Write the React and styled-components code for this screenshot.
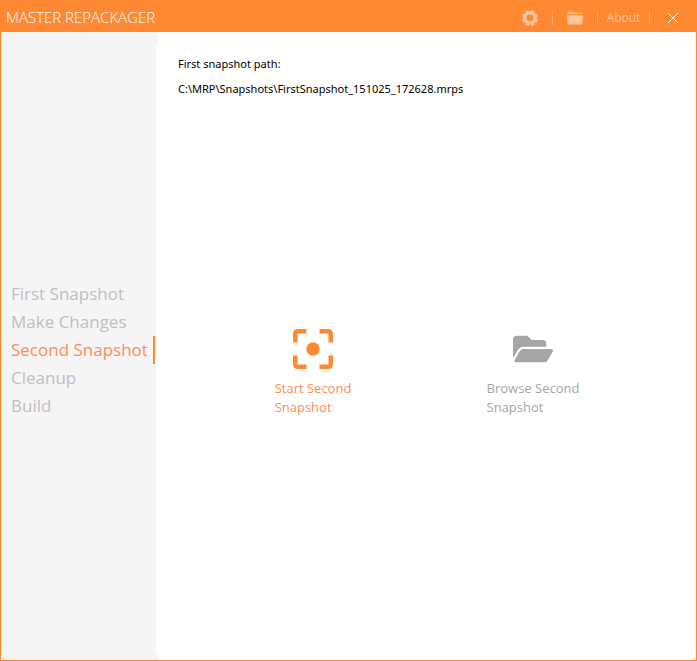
import React from "react";
import styled, { createGlobalStyle } from "styled-components";
import { FaFolderOpen } from "react-icons/fa";

const accent = "#ff8833";

const GlobalStyle = createGlobalStyle`
  *, *::before, *::after { box-sizing: border-box; }
  body { margin: 0; background: #fff; }
  button, input { font: inherit; color: inherit; }
`;

const Window = styled.div`
  display: flex;
  flex-direction: column;
  min-height: 100vh;
  border: 1px solid ${accent};
  font-family: "Open Sans", "Noto Sans", sans-serif;
`;

const TitleBar = styled.header`
  display: flex;
  align-items: center;
  justify-content: space-between;
  height: 31px;
  padding: 0 1px 0 5px;
  background: ${accent};
  color: #fff;
`;

const Title = styled.h1`
  margin: 0;
  font-size: 15px;
  font-weight: 300;
  line-height: 24px;
`;

const Tools = styled.div`
  display: flex;
  align-items: center;
  padding-top: 2px;
`;

const ToolButton = styled.button`
  display: flex;
  align-items: center;
  justify-content: center;
  width: ${(p) => p.$width}px;
  height: 24px;
  padding: 0;
  border: 0;
  background: none;
  color: ${(p) => (p.$strong ? "#fff" : "#ffc499")};
  font-size: 12px;
  cursor: pointer;
`;

const Divider = styled.span`
  width: 1px;
  height: 14px;
  background: #ffab70;
`;

const Body = styled.div`
  display: flex;
  flex: 1;
`;

const Sidebar = styled.nav`
  position: relative;
  display: flex;
  flex-direction: column;
  justify-content: center;
  flex: 0 0 155px;
  padding: 7px 1px 0 0;
  background: #f5f5f5;

  &::before,
  &::after {
    content: "";
    position: absolute;
    left: 100%;
    width: 2px;
    background: #f5f5f5;
  }
  &::before {
    top: 0;
    height: 11px;
  }
  &::after {
    bottom: 0;
    height: 6px;
  }
`;

const Step = styled.button`
  height: 28px;
  padding: 0 0 0 10px;
  border: 0;
  border-right: 2px solid ${(p) => (p.$active ? accent : "transparent")};
  background: none;
  color: ${(p) => (p.$active ? "#ff8c5a" : "#bfbfbf")};
  font-size: 17px;
  line-height: 28px;
  text-align: left;
  white-space: nowrap;
  cursor: pointer;
`;

const Main = styled.main`
  display: flex;
  flex: 1;
  flex-direction: column;
  padding: 22px 28px 14px 22px;
`;

const PathField = styled.div`
  display: flex;
  flex-direction: column;
  gap: 5px;
  color: #000;
  font-family: "Noto Sans", "Open Sans", sans-serif;
  font-size: 11px;
  line-height: 20px;
`;

const PathInput = styled.input`
  width: 100%;
  height: 20px;
  padding: 0;
  border: 0;
  outline: 0;
  background: none;
`;

const Actions = styled.div`
  display: grid;
  flex: 1;
  grid-template-columns: repeat(2, 220px);
  align-content: center;
  justify-content: center;
`;

const Action = styled.button`
  display: flex;
  flex-direction: column;
  align-items: center;
  gap: 9px;
  padding: 0;
  border: 0;
  background: none;
  color: ${(p) => (p.$primary ? "#ff8c5a" : "#a6a6a6")};
  font-size: 13px;
  line-height: 19px;
  text-align: left;
  cursor: pointer;
`;

const IconBox = styled.span`
  display: flex;
  align-items: center;
  justify-content: center;
  height: 42px;
  color: ${(p) => (p.$primary ? accent : "#a6a6a6")};
`;

const GearIcon = () => (
  <svg width="16" height="16" viewBox="0 0 16 16" aria-hidden="true">
    <g fill="currentColor">
      {[22.5, 67.5, 112.5, 157.5].map((angle) => (
        <rect key={angle} x="6.2" y="0" width="3.6" height="16" rx="0.8" transform={`rotate(${angle} 8 8)`} />
      ))}
      <circle cx="8" cy="8" r="6.6" />
    </g>
    <circle cx="8" cy="8" r="3.4" fill={accent} />
  </svg>
);

const FolderIcon = () => (
  <svg width="16" height="14" viewBox="0 0 16 14" fill="currentColor" aria-hidden="true">
    <path d="M.5 3V1.2Q.5.5 1.2.5H5Q5.6.5 6 1L6.6 1.6H14.6Q15.4 1.6 15.4 2.4V3Z" />
    <path d="M0 4.2H16L15.5 12.4Q15.4 13.5 14.4 13.5H1.7Q.7 13.5.6 12.4Z" />
  </svg>
);

const CloseIcon = () => (
  <svg width="12" height="12" viewBox="0 0 12 12" fill="none" stroke="currentColor" aria-hidden="true">
    <path d="M1 1 11 11M11 1 1 11" />
  </svg>
);

const CaptureIcon = () => (
  <svg width="40" height="40" viewBox="0 0 40 40" fill="none" stroke="currentColor" strokeWidth="4.5" aria-hidden="true">
    <path d="M2.25 13.5V5Q2.25 2.25 5 2.25H13.5M26.5 2.25H35Q37.75 2.25 37.75 5V13.5M37.75 26.5V35Q37.75 37.75 35 37.75H26.5M13.5 37.75H5Q2.25 37.75 2.25 35V26.5" />
    <circle cx="20" cy="20" r="6.7" fill="currentColor" stroke="none" />
  </svg>
);

const steps = ["First Snapshot", "Make Changes", "Second Snapshot", "Cleanup", "Build"];

export default function App() {
  return (
    <>
      <GlobalStyle />
      <Window>
        <TitleBar>
          <Title>MASTER REPACKAGER</Title>
          <Tools>
            <ToolButton $width={44} aria-label="Settings"><GearIcon /></ToolButton>
            <Divider />
            <ToolButton $width={44} aria-label="Open folder"><FolderIcon /></ToolButton>
            <Divider />
            <ToolButton $width={51}>About</ToolButton>
            <Divider />
            <ToolButton $width={45} $strong aria-label="Close"><CloseIcon /></ToolButton>
          </Tools>
        </TitleBar>
        <Body>
          <Sidebar aria-label="Steps">
            {steps.map((step) => (
              <Step key={step} $active={step === "Second Snapshot"}>{step}</Step>
            ))}
          </Sidebar>
          <Main>
            <PathField>
              <label htmlFor="snapshot-path">First snapshot path:</label>
              <PathInput
                id="snapshot-path"
                readOnly
                value="C:\MRP\Snapshots\FirstSnapshot_151025_172628.mrps"
              />
            </PathField>
            <Actions>
              <Action $primary>
                <IconBox $primary><CaptureIcon /></IconBox>
                <span>Start Second<br />Snapshot</span>
              </Action>
              <Action>
                <IconBox><FaFolderOpen size={40} /></IconBox>
                <span>Browse Second<br />Snapshot</span>
              </Action>
            </Actions>
          </Main>
        </Body>
      </Window>
    </>
  );
}
